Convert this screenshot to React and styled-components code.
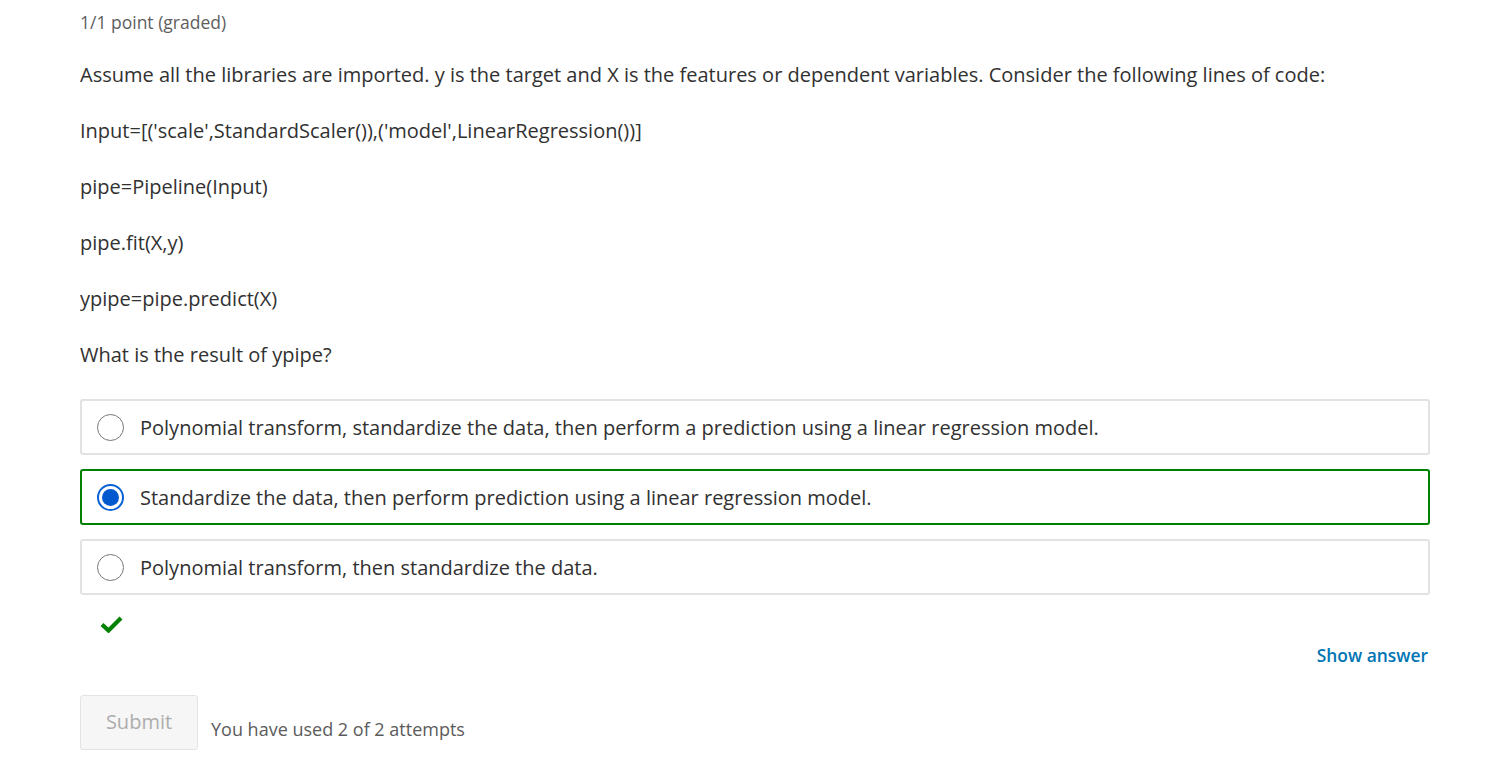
import React, { useState } from 'react';
import styled, { createGlobalStyle } from 'styled-components';

const GlobalStyle = createGlobalStyle`
  html, body {
    margin: 0;
    padding: 0;
    background: #fff;
  }
  body {
    font-family: 'Open Sans', 'Liberation Sans', sans-serif;
    color: #313131;
  }
`;

const Problem = styled.section`
  padding: 10px 75px 20px 80px;
`;

const Grade = styled.div`
  font-size: 17.5px;
  line-height: 24px;
  color: #5e5e5e;
  margin-bottom: 27px;
`;

const Para = styled.p`
  margin: 0 0 28px;
  font-size: 20px;
  line-height: 28px;
  color: #313131;
`;

const Choices = styled.div`
  display: flex;
  flex-direction: column;
  gap: 14px;
  margin-top: 30px;
`;

const Choice = styled.label`
  display: flex;
  align-items: center;
  gap: 16px;
  height: 56px;
  box-sizing: border-box;
  padding: 0 15px;
  border: 2px solid ${({ correct }) => (correct ? '#008100' : '#e2e2e2')};
  border-radius: 3px;
  font-size: 20px;
  color: #313131;
  cursor: pointer;
`;

const Radio = styled.span`
  flex: none;
  width: 27px;
  height: 27px;
  box-sizing: border-box;
  border-radius: 50%;
  border: ${({ checked }) => (checked ? '2px solid #0961d6' : '1.5px solid #777')};
  display: flex;
  align-items: center;
  justify-content: center;
  &::after {
    content: '';
    display: ${({ checked }) => (checked ? 'block' : 'none')};
    width: 17px;
    height: 17px;
    border-radius: 50%;
    background: #0059cf;
  }
`;

const Status = styled.div`
  padding: 20px 0 0 20px;
  height: 20px;
`;

const ActionRow = styled.div`
  display: flex;
  justify-content: flex-end;
  margin-top: 8px;
`;

const LinkButton = styled.button`
  border: none;
  background: none;
  padding: 0 2px 0 0;
  font-family: inherit;
  font-size: 17.4px;
  font-weight: 600;
  color: #0075b4;
  cursor: pointer;
`;

const SubmitRow = styled.div`
  display: flex;
  align-items: flex-end;
  gap: 13px;
  margin-top: 28px;
`;

const SubmitButton = styled.button`
  width: 118px;
  height: 55px;
  box-sizing: border-box;
  border: 1px solid #e4e4e4;
  border-radius: 3px;
  background: #f6f6f6;
  font-family: inherit;
  font-size: 20px;
  color: #adadad;
  padding-bottom: 4px;
`;

const Attempts = styled.span`
  font-size: 18px;
  color: #5b5b5b;
  line-height: 28px;
  padding-bottom: 7px;
`;

const CheckIcon = () => (
  <svg width="23" height="18" viewBox="0 0 23 18">
    <path d="M2 9.5 L8.5 15.5 L21 3" fill="none" stroke="#008100" strokeWidth="4.2" />
  </svg>
);

const options = [
  'Polynomial transform, standardize the data, then perform a prediction using a linear regression model.',
  'Standardize the data, then perform prediction using a linear regression model.',
  'Polynomial transform, then standardize the data.',
];

const App = () => {
  const [selected, setSelected] = useState(1);

  return (
    <>
      <GlobalStyle />
      <Problem>
        <Grade>1/1 point (graded)</Grade>
        <Para>
          Assume all the libraries are imported. y is the target and X is the features or dependent variables. Consider the following lines of code:
        </Para>
        <Para>Input=[('scale',StandardScaler()),('model',LinearRegression())]</Para>
        <Para>pipe=Pipeline(Input)</Para>
        <Para>pipe.fit(X,y)</Para>
        <Para>ypipe=pipe.predict(X)</Para>
        <Para style={{ marginBottom: 0 }}>What is the result of ypipe?</Para>
        <Choices>
          {options.map((text, i) => (
            <Choice key={i} correct={i === selected} onClick={() => setSelected(i)}>
              <Radio checked={i === selected} />
              {text}
            </Choice>
          ))}
        </Choices>
        <Status>
          <CheckIcon />
        </Status>
        <ActionRow>
          <LinkButton>Show answer</LinkButton>
        </ActionRow>
        <SubmitRow>
          <SubmitButton disabled>Submit</SubmitButton>
          <Attempts>You have used 2 of 2 attempts</Attempts>
        </SubmitRow>
      </Problem>
    </>
  );
};

export default App;
